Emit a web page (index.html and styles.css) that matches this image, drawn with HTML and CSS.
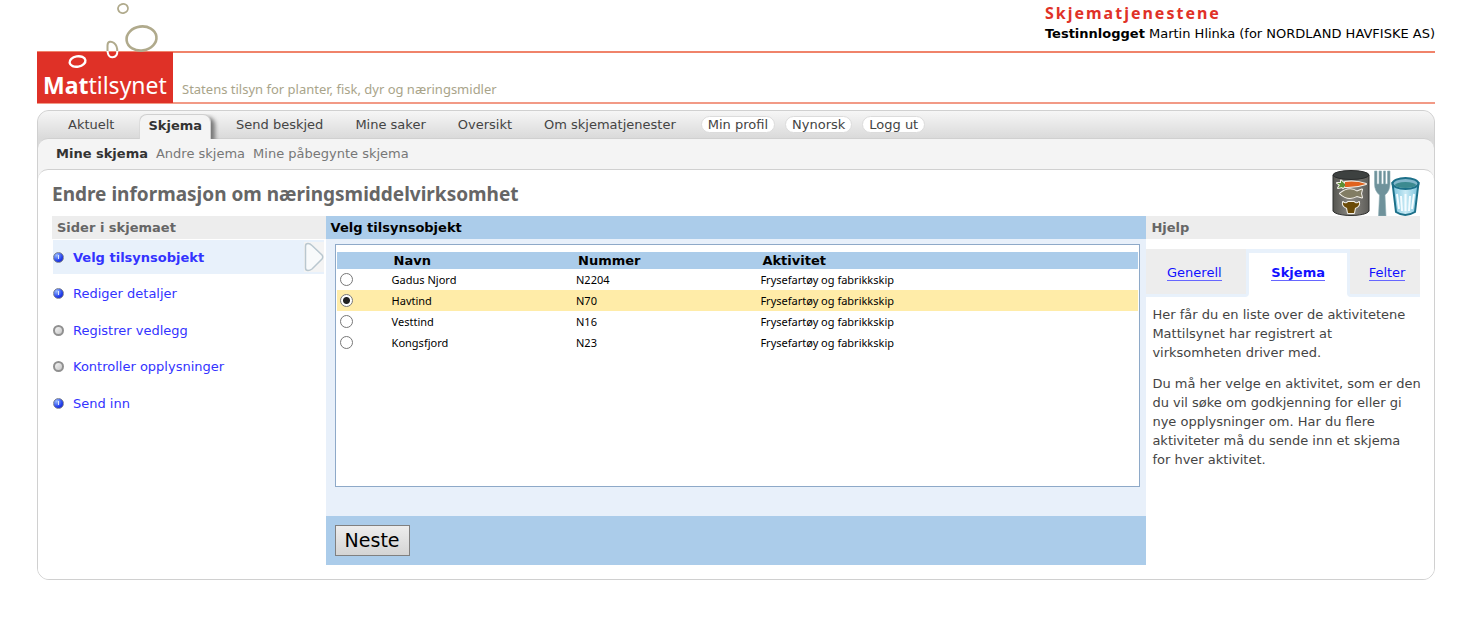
FILE: index.html
```html
<!DOCTYPE html>
<html lang="no">
<head>
<meta charset="utf-8">
<title>Skjematjenestene - Mattilsynet</title>
<link rel="stylesheet" href="styles.css">
</head>
<body>
<div class="page">
  <header class="masthead">
    <div class="masthead-top">
      <div class="account">
        <p class="service-name">Skjematjenestene</p>
        <p class="login-status"><strong>Testinnlogget</strong> Martin Hlinka (for NORDLAND HAVFISKE AS)</p>
      </div>
    </div>
    <div class="brand-band">
      <a class="logo" href="#"><strong>Mat</strong>tilsynet</a>
      <p class="tagline">Statens tilsyn for planter, fisk, dyr og næringsmidler</p>
    </div>
    <svg class="bubbles" width="136" height="72" viewBox="0 0 136 72" fill="none" aria-hidden="true">
      <ellipse cx="86" cy="8.500" rx="5" ry="4.500" stroke="#b0aa8c" stroke-width="1.800" transform="rotate(-15 86 8.500)"/>
      <ellipse cx="104.500" cy="38.500" rx="15" ry="12" stroke="#b0aa8c" stroke-width="2.600" transform="rotate(-8 104.500 38.500)"/>
      <path d="M70.500 52V45.500C70.500 41 74.500 41 77 43C79.500 45 80.500 48 80.300 52" stroke="#b0aa8c" stroke-width="2"/>
      <path d="M70.500 51C70.800 55 72.500 57.500 75.500 57.300C79 57 80.500 54.500 80.300 51" stroke="#fff" stroke-width="2"/>
      <ellipse cx="40.500" cy="61.500" rx="8" ry="5.200" stroke="#fff" stroke-width="2.400" transform="rotate(-10 40.500 61.500)"/>
    </svg>
  </header>

  <div class="shell">
    <nav class="main-nav" aria-label="Hovedmeny">
      <a class="nav-link" href="#">Aktuelt</a>
      <a class="nav-link nav-link-active" href="#" aria-current="page">Skjema</a>
      <a class="nav-link" href="#">Send beskjed</a>
      <a class="nav-link" href="#">Mine saker</a>
      <a class="nav-link" href="#">Oversikt</a>
      <a class="nav-link" href="#">Om skjematjenester</a>
      <div class="pills">
        <a class="pill" href="#">Min profil</a>
        <a class="pill" href="#">Nynorsk</a>
        <a class="pill" href="#">Logg ut</a>
      </div>
    </nav>
    <div class="sub-area">
      <nav class="sub-nav" aria-label="Undermeny">
        <a class="sub-link sub-link-active" href="#">Mine skjema</a>
        <a class="sub-link" href="#">Andre skjema</a>
        <a class="sub-link" href="#">Mine påbegynte skjema</a>
      </nav>
      <main class="content">
        <div class="title-row">
          <h1 class="title">Endre informasjon om næringsmiddelvirksomhet</h1>
          <svg class="title-art" width="88" height="47" viewBox="0 0 88 47" aria-hidden="true">
            <defs>
              <linearGradient id="can"><stop offset="0" stop-color="#555550"/><stop offset=".5" stop-color="#8d8b85"/><stop offset="1" stop-color="#5c5b57"/></linearGradient>
              <linearGradient id="glass"><stop offset="0" stop-color="#7cc4dd"/><stop offset=".5" stop-color="#c9eaf5"/><stop offset="1" stop-color="#7cc4dd"/></linearGradient>
            </defs>
            <path d="M1 5V41C4 47 34 47 37 41V5Z" fill="url(#can)" stroke="#2f302f"/>
            <ellipse cx="19" cy="5" rx="18" ry="4.500" fill="#3d4140" stroke="#2a2c2c"/>
            <g fill="none" stroke="#f4f1ea" stroke-width="2" stroke-linejoin="round">
              <path d="M13 12Q24 10.500 34 14Q24 17.500 13 17Z"/>
              <path d="M13 14L9 10.500L9 13L5 13L8 15L6 18L10 17L11 18L13 16Z"/>
              <path d="M8 23.500Q17 16 25 21.500L30 19.500L29 23.500L30 27.500L25 26Q16 31 8 23.500Z"/>
              <path d="M11 32Q12 34 15 33L16 32H22L23 33Q26 34 27 32Q28 36 23 38L22 43H16L15 38Q10 36 11 32Z"/>
            </g>
            <path d="M13 12Q24 10.500 34 14Q24 17.500 13 17Z" fill="#e0621d"/>
            <path d="M13 14L9 10.500L9 13L5 13L8 15L6 18L10 17L11 18L13 16Z" fill="#5d8f35"/>
            <path d="M8 23.500Q17 16 25 21.500L30 19.500L29 23.500L30 27.500L25 26Q16 31 8 23.500Z" fill="#827d64"/>
            <path d="M11 32Q12 34 15 33L16 32H22L23 33Q26 34 27 32Q28 36 23 38L22 43H16L15 38Q10 36 11 32Z" fill="#6b4b08"/>
            <path d="M42.500 1V14Q42.500 21 47.500 25L46.500 46H54L53 25Q58 21 58 14V1H55.500V14H53.500V1H51.500V14H49.500V1H47V14H45V1Z" fill="#6f929b" stroke="#8faeb5" stroke-width=".6"/>
            <path d="M60.500 13L64 42Q73 48 83 42L86.500 13Z" fill="url(#glass)" stroke="#1c7089" stroke-width="2"/>
            <path d="M65 24L67 39M69 26L70 41M73.500 24V41M78 26L77 41M82 24L80 39" fill="none" stroke="#f4fcff" stroke-width="2"/>
            <ellipse cx="73.500" cy="13.500" rx="13" ry="5.500" fill="#83b7cb" stroke="#1c7089" stroke-width="2"/>
            <ellipse cx="73.500" cy="15" rx="10.500" ry="3" fill="#3c8a90"/>
          </svg>
        </div>
        <div class="columns">
          <section class="steps">
            <h2 class="panel-head">Sider i skjemaet</h2>
            <ol class="step-list">
              <li class="step step-current">
                <span class="dot dot-todo"></span><a class="step-link" href="#">Velg tilsynsobjekt</a>
                <svg class="step-arrow" width="20" height="30" viewBox="0 0 20 30" aria-hidden="true"><rect width="20" height="30" fill="#f4f4f4"/><path d="M1.500 4Q1.500 1.500 4 1.500Q6 1.500 8 3.500L18 13Q19.500 15 18 17L8 27Q6 28.500 4 28.500Q1.500 28.500 1.500 26Z" fill="#f8fafb" stroke="#b9c7cf" stroke-width="1.500"/></svg>
              </li>
              <li class="step"><span class="dot dot-todo"></span><a class="step-link" href="#">Rediger detaljer</a></li>
              <li class="step"><span class="dot"></span><a class="step-link" href="#">Registrer vedlegg</a></li>
              <li class="step"><span class="dot"></span><a class="step-link" href="#">Kontroller opplysninger</a></li>
              <li class="step"><span class="dot dot-todo"></span><a class="step-link" href="#">Send inn</a></li>
            </ol>
          </section>

          <form class="picker">
            <h2 class="panel-head panel-head-blue">Velg tilsynsobjekt</h2>
            <div class="picker-body">
              <div class="object-box">
                <table class="objects">
                  <colgroup><col class="col-radio"><col class="col-data"><col class="col-data"><col></colgroup>
                  <thead>
                    <tr><th></th><th>Navn</th><th>Nummer</th><th>Aktivitet</th></tr>
                  </thead>
                  <tbody>
                    <tr><td><input class="radio" type="radio" name="obj" id="o1"></td><td><label for="o1">Gadus Njord</label></td><td>N2204</td><td>Frysefartøy og fabrikkskip</td></tr>
                    <tr class="selected"><td><input class="radio" type="radio" name="obj" id="o2" checked></td><td><label for="o2">Havtind</label></td><td>N70</td><td>Frysefartøy og fabrikkskip</td></tr>
                    <tr><td><input class="radio" type="radio" name="obj" id="o3"></td><td><label for="o3">Vesttind</label></td><td>N16</td><td>Frysefartøy og fabrikkskip</td></tr>
                    <tr><td><input class="radio" type="radio" name="obj" id="o4"></td><td><label for="o4">Kongsfjord</label></td><td>N23</td><td>Frysefartøy og fabrikkskip</td></tr>
                  </tbody>
                </table>
              </div>
            </div>
            <div class="picker-foot"><button class="next" type="button">Neste</button></div>
          </form>

          <aside class="help">
            <h2 class="panel-head">Hjelp</h2>
            <div class="help-tabs">
              <div class="help-tab help-tab-first"><a class="help-link" href="#">Generell</a></div>
              <div class="help-tab help-tab-active"><a class="help-link" href="#">Skjema</a></div>
              <div class="help-tab help-tab-last"><a class="help-link" href="#">Felter</a></div>
            </div>
            <div class="help-text">
              <p>Her får du en liste over de aktivitetene Mattilsynet har registrert at virksomheten driver med.</p>
              <p>Du må her velge en aktivitet, som er den du vil søke om godkjenning for eller gi nye opplysninger om. Har du flere aktiviteter må du sende inn et skjema for&nbsp;hver aktivitet.</p>
            </div>
          </aside>
        </div>
      </main>
    </div>
  </div>
</div>
</body>
</html>
```

FILE: styles.css
```css
* { box-sizing: border-box; }
body {
  margin: 0;
  background: #fff;
  color: #444;
  font: 13px/19px "DejaVu Sans", Verdana, sans-serif;
}
h1, h2, p, ol { margin: 0; padding: 0; }
a { text-decoration: none; color: inherit; }

.page { padding: 0 37px; }

.masthead { position: relative; }
.masthead-top {
  display: flex;
  justify-content: flex-end;
  height: 51px;
}
.account { padding-top: 3px; color: #000; }
.service-name {
  color: #e03127;
  font: bold 16px/20px "Noto Sans", "Trebuchet MS", sans-serif;
  letter-spacing: 2px;
}
.login-status { line-height: 22px; }
.brand-band {
  display: flex;
  height: 53px;
  border-top: 2px solid #f0836a;
  border-bottom: 2px solid #f29a86;
}
.logo {
  width: 136px;
  margin: -1px 0;
  padding: 19px 0 0 6px;
  background: #df3127;
  color: #fff;
  font: 23px/28px "Noto Sans", sans-serif;
}
.tagline {
  padding: 27px 0 0 9px;
  color: #a9a48a;
  font: 13px/19px "Noto Sans", sans-serif;
}
.bubbles { position: absolute; top: 0; left: 0; }

.shell {
  margin-top: 6px;
  border: 1px solid #d0d0d0;
  border-radius: 12px;
  background: #dadada;
  overflow: hidden;
}
.main-nav {
  display: flex;
  align-items: flex-end;
  height: 27px;
  padding-left: 14px;
  background: linear-gradient(#f6f6f6, #dadada);
}
.nav-link { padding: 0 16px; line-height: 26px; }
.nav-link-active {
  position: relative;
  z-index: 1;
  margin: 0 9px -1px;
  padding: 0 8px 3px;
  border: 1px solid #d0d0d0;
  border-bottom: 0;
  border-radius: 8px 8px 0 0;
  background: #f4f4f4;
  box-shadow: 4px 3px 4px #777;
  clip-path: inset(0 -8px 0 0);
  color: #333;
  font-weight: bold;
  line-height: 21px;
}
.pills { display: flex; gap: 10px; padding: 0 0 5px 9px; }
.pill {
  padding: 0 6px;
  border: 1px solid #dcdcdc;
  border-radius: 9px;
  background: #fff;
  line-height: 15px;
}
.sub-area {
  border-top: 1px solid #d0d0d0;
  border-radius: 10px 10px 0 0;
  background: #f4f4f4;
}
.sub-nav {
  display: flex;
  gap: 8px;
  padding: 0 18px;
  color: #777;
  line-height: 30px;
}
.sub-link-active { color: #333; font-weight: bold; }
.content {
  padding: 0 14px 14px;
  border-top: 1px solid #d0d0d0;
  border-radius: 10px 10px 0 0;
  background: #fff;
}
.title-row { display: flex; justify-content: space-between; height: 46px; }
.title {
  padding-top: 10px;
  color: #666;
  font: bold 19px/28px "Noto Sans", "Trebuchet MS", sans-serif;
}

.columns { display: grid; grid-template-columns: 1fr 3fr 1fr; }
.panel-head {
  padding: 0 5px;
  background: #ededed;
  color: #666;
  font-size: 13px;
  line-height: 23px;
}
.panel-head-blue { background: #abccea; color: #000; }

.step-list {
  display: flex;
  flex-direction: column;
  justify-content: space-between;
  min-height: 181px;
  padding: 1px 2px 0 1px;
  list-style: none;
}
.step { display: flex; align-items: center; height: 34px; color: #33f; }
.step-current { background: #e8f1fb; font-weight: bold; }
.step-arrow { margin-left: auto; }
.dot {
  width: 11px;
  height: 11px;
  margin-right: 9px;
  border: 2px solid #909090;
  border-radius: 50%;
  background: linear-gradient(135deg, #f4f4f4, #c8c8c8);
}
.dot-todo {
  border: 1px solid #7c8292;
  background: linear-gradient(#dfe6ff, #dfe6ff) 4px 2px / 1px 4px no-repeat, radial-gradient(circle at 30% 25%, #9abfff, #2340ee 60%, #1414b0);
}

.picker { display: flex; flex-direction: column; }
.picker-body { padding: 5px 6px 29px 9px; background: #e8f0fa; }
.object-box {
  min-height: 243px;
  padding: 7px 1px;
  border: 1px solid #8ea9c8;
  background: #fff;
}
.objects {
  width: 100%;
  border-collapse: collapse;
  table-layout: fixed;
  color: #000;
  font: 11px/20px "Noto Sans", Tahoma, sans-serif;
}
.col-radio { width: 53px; }
.col-data { width: 23%; }
.objects th {
  height: 17px;
  padding: 0 4px;
  background: #abccea;
  font: bold 13px/17px "DejaVu Sans", Verdana, sans-serif;
  text-align: left;
}
.objects td { height: 21px; padding: 0 2px; }
.selected { background: #ffeca8; }
.radio {
  appearance: none;
  display: block;
  width: 13px;
  height: 13px;
  margin: 0 1px;
  border: 1px solid #777;
  border-radius: 50%;
  background: #fff;
}
.radio:checked { background: radial-gradient(circle, #222 3px, #fff 4px); }
.picker-foot { padding: 9px; background: #abccea; }
.next {
  display: block;
  height: 31px;
  padding: 0 9px;
  border: 1px solid #808080;
  background: linear-gradient(#ededed, #d4d4d4);
  color: #000;
  font: 19px/29px "DejaVu Sans", Verdana, sans-serif;
}

.help-tabs {
  display: grid;
  grid-template-columns: 103fr 98fr 73fr;
  margin-top: 10px;
}
.help-tab {
  height: 48px;
  border-bottom: 3px solid #e8f1fb;
  background: #ededed;
  line-height: 48px;
  text-align: center;
}
.help-tab-first { border-right: 3px solid #e8f1fb; border-radius: 0 0 4px 0; padding-right: 4px; }
.help-tab-last { border-left: 3px solid #e8f1fb; border-radius: 0 0 0 4px; padding-left: 4px; }
.help-tab-active {
  border-top: 4px solid #e8f1fb;
  border-bottom: 0;
  background: #fff;
  font-weight: bold;
  line-height: 40px;
}
.help-link { border-bottom: 1px solid #66f; color: #11f; }
.help-text { display: grid; gap: 12px; margin-right: -4px; padding: 8px 0 0 6px; }
```
